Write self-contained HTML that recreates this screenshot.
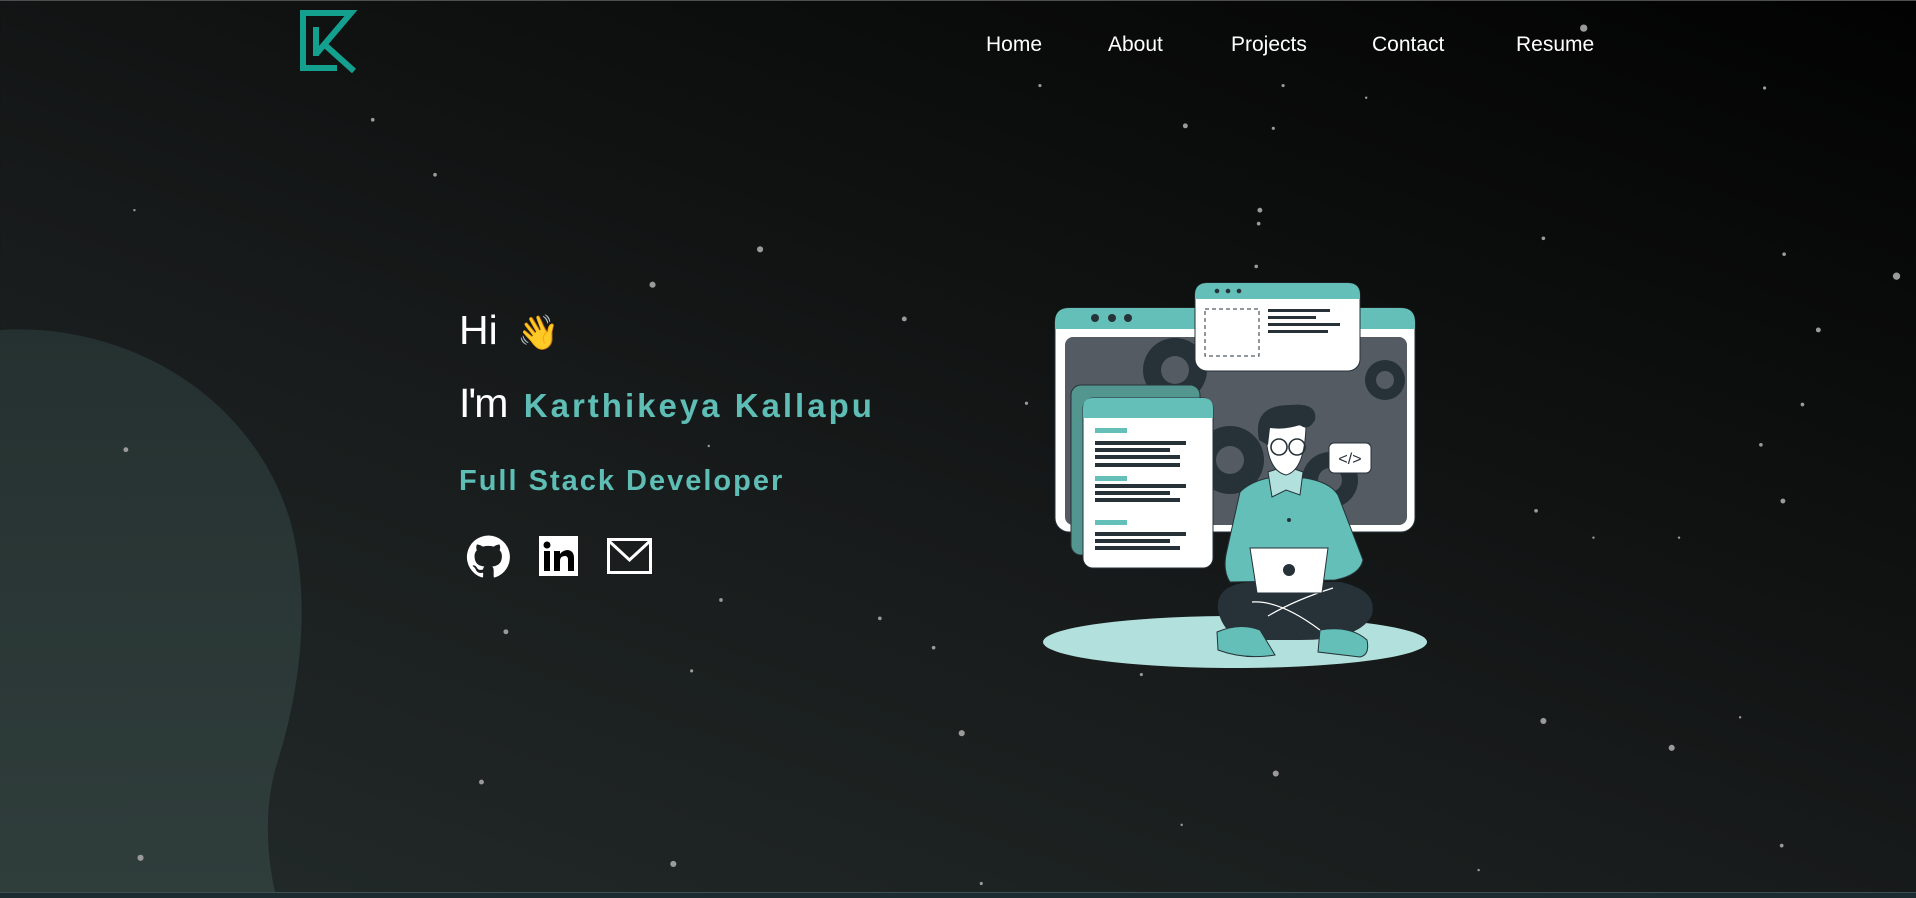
<!DOCTYPE html>
<html><head><meta charset="utf-8"><style>
html,body{margin:0;padding:0}
body{width:1916px;height:897px;overflow:hidden;position:relative;font-family:"Liberation Sans",sans-serif;
background:linear-gradient(20deg,#232b2a 0%,#171a1a 45%,#0b0c0c 75%,#020202 100%);}
.top{position:absolute;left:0;top:0;width:1916px;height:1px;background:#4c4e50}
.bot{position:absolute;left:0;top:892px;width:1916px;height:5px;background:#1b2b30;border-top:1px solid #3d5058}
.nav{position:absolute;top:31px;color:#fff;font-size:21px;line-height:28px}
.t{position:absolute;color:#fff}
</style></head><body>
<svg width="1916" height="897" style="position:absolute;left:0;top:0">
<defs><linearGradient id="bg" x1="0" y1="0" x2="0" y2="1"><stop offset="0" stop-color="#253130"/><stop offset="1" stop-color="#2f3d3b"/></linearGradient></defs>
<path d="M0 330 C120 322 250 390 290 520 C312 600 300 690 278 760 C262 810 268 860 275 892 L0 892 Z" fill="url(#bg)"/>
<g fill="#9a9a9a" transform="scale(1.222)">
<circle cx="305" cy="98" r="1.5"/><circle cx="356" cy="143" r="1.5"/><circle cx="110" cy="172" r="1"/><circle cx="622" cy="204" r="2.5"/><circle cx="534" cy="233" r="2.5"/><circle cx="740" cy="261" r="2"/><circle cx="851" cy="70" r="1.3"/><circle cx="1050" cy="70" r="1.3"/><circle cx="1118" cy="80" r="1"/><circle cx="970" cy="103" r="2"/><circle cx="1042" cy="105" r="1.3"/><circle cx="1031" cy="172" r="2"/><circle cx="1030" cy="183" r="1.5"/><circle cx="1028" cy="218" r="1.5"/><circle cx="1263" cy="195" r="1.5"/><circle cx="1296" cy="23" r="3"/><circle cx="1444" cy="72" r="1.3"/><circle cx="1460" cy="208" r="1.5"/><circle cx="1552" cy="226" r="3"/><circle cx="1488" cy="270" r="2"/><circle cx="1475" cy="331" r="1.5"/><circle cx="1441" cy="364" r="1.5"/><circle cx="1459" cy="410" r="2"/><circle cx="1374" cy="440" r="1"/><circle cx="1304" cy="440" r="1"/><circle cx="1257" cy="418" r="1.5"/><circle cx="840" cy="330" r="1.3"/><circle cx="103" cy="368" r="2"/><circle cx="580" cy="365" r="1"/><circle cx="590" cy="491" r="1.5"/><circle cx="720" cy="506" r="1.5"/><circle cx="414" cy="517" r="2"/><circle cx="764" cy="530" r="1.5"/><circle cx="566" cy="549" r="1.3"/><circle cx="934" cy="552" r="1.3"/><circle cx="1263" cy="590" r="2.5"/><circle cx="1368" cy="612" r="2.5"/><circle cx="1424" cy="587" r="1"/><circle cx="787" cy="600" r="2.5"/><circle cx="394" cy="640" r="2"/><circle cx="1044" cy="633" r="2.5"/><circle cx="967" cy="675" r="1"/><circle cx="1458" cy="692" r="1.5"/><circle cx="115" cy="702" r="2.5"/><circle cx="551" cy="707" r="2.5"/><circle cx="803" cy="723" r="1.3"/><circle cx="1210" cy="712" r="1"/>
</g>
<!-- logo -->
<g fill="none" stroke="#14a08e" stroke-width="6" stroke-linejoin="miter">
<path d="M303 71 V13 H351 L317 53"/>
<path d="M303 68 H337"/>
<path d="M316 27 V56"/>
<path d="M325 45 L354 71"/>
</g>
<!-- illustration -->
<ellipse cx="1235" cy="642" rx="192" ry="26" fill="#b2e0dc"/>
<rect x="1055" y="308" width="360" height="224" rx="14" fill="#fff" stroke="#263238" stroke-width="1"/>
<path d="M1055 329 V322 Q1055 308 1069 308 H1401 Q1415 308 1415 322 V329 Z" fill="#63bfb8"/>
<rect x="1065" y="337" width="342" height="188" rx="8" fill="#545b62"/>
<g fill="#263238">
<circle cx="1095" cy="318" r="4"/><circle cx="1112" cy="318" r="4"/><circle cx="1128" cy="318" r="4"/>
<circle cx="1175" cy="370" r="32"/><circle cx="1230" cy="460" r="34"/><circle cx="1385" cy="380" r="20"/><circle cx="1330" cy="480" r="28"/>
</g>
<g fill="#545b62"><circle cx="1175" cy="370" r="14"/><circle cx="1230" cy="460" r="14"/><circle cx="1385" cy="380" r="9"/><circle cx="1330" cy="480" r="12"/></g>
<rect x="1195" y="283" width="165" height="88" rx="12" fill="#fff" stroke="#263238" stroke-width="1"/>
<path d="M1195 299 V295 Q1195 283 1207 283 H1348 Q1360 283 1360 295 V299 Z" fill="#63bfb8"/>
<g fill="#263238"><circle cx="1217" cy="291" r="2.3"/><circle cx="1228" cy="291" r="2.3"/><circle cx="1239" cy="291" r="2.3"/>
<rect x="1268" y="309" width="62" height="3"/><rect x="1268" y="316" width="48" height="3"/><rect x="1268" y="323" width="72" height="3"/><rect x="1268" y="330" width="60" height="3"/></g>
<rect x="1205" y="309" width="54" height="47" fill="none" stroke="#263238" stroke-dasharray="4 3"/>
<rect x="1071" y="385" width="129" height="170" rx="10" fill="#52968f" stroke="#263238"/>
<rect x="1083" y="398" width="130" height="170" rx="10" fill="#fff" stroke="#263238"/>
<path d="M1083 418 V408 Q1083 398 1093 398 H1203 Q1213 398 1213 408 V418 Z" fill="#63bfb8"/>
<g fill="#63bfb8"><rect x="1095" y="428" width="32" height="5"/><rect x="1095" y="476" width="32" height="5"/><rect x="1095" y="520" width="32" height="5"/></g>
<g fill="#263238"><rect x="1095" y="441" width="91" height="4"/><rect x="1095" y="448" width="75" height="4"/><rect x="1095" y="455" width="85" height="4"/><rect x="1095" y="463" width="85" height="4"/><rect x="1095" y="484" width="91" height="4"/><rect x="1095" y="491" width="75" height="4"/><rect x="1095" y="498" width="85" height="4"/><rect x="1095" y="532" width="91" height="4"/><rect x="1095" y="539" width="75" height="4"/><rect x="1095" y="546" width="85" height="4"/></g>
<rect x="1329" y="443" width="42" height="30" rx="5" fill="#fff" stroke="#263238"/>
<text x="1350" y="464" font-size="16" text-anchor="middle" fill="#263238" font-family="Liberation Sans">&lt;/&gt;</text>
<!-- person -->
<path d="M1240 492 Q1250 482 1268 478 H1305 Q1330 482 1338 495 L1363 560 Q1360 575 1335 580 L1230 582 Q1222 570 1227 550 Z" fill="#63bfb8" stroke="#263238"/>
<path d="M1218 610 Q1215 585 1250 582 H1340 Q1378 590 1372 615 Q1360 640 1300 640 H1240 Q1222 630 1218 610Z" fill="#263238"/>
<path d="M1217 632 Q1240 622 1260 630 L1275 655 Q1245 660 1218 650Z" fill="#63bfb8" stroke="#263238"/>
<path d="M1320 630 Q1350 625 1367 640 Q1370 655 1360 657 L1318 652Z" fill="#63bfb8" stroke="#263238"/>
<path d="M1252 602 Q1280 600 1320 630 M1268 616 Q1295 600 1333 588" stroke="#fff" fill="none" stroke-width="1.2"/>
<path d="M1250 548 H1328 L1322 593 H1257 Z" fill="#fff" stroke="#263238"/>
<circle cx="1289" cy="570" r="6" fill="#263238"/>
<path d="M1268 472 L1286 466 L1303 472 L1300 495 L1286 490 L1272 497 Z" fill="#b2e0dc" stroke="#263238"/>
<path d="M1266 425 Q1265 470 1286 475 Q1305 470 1306 425 Z" fill="#fff" stroke="#263238"/>
<path d="M1259 440 Q1252 405 1290 405 Q1318 402 1315 420 Q1308 432 1300 425 Q1285 430 1270 428 L1268 445 Z" fill="#263238"/>
<g fill="none" stroke="#263238" stroke-width="1.6"><circle cx="1279" cy="447" r="8"/><circle cx="1297" cy="447" r="8"/></g>
<circle cx="1289" cy="520" r="2" fill="#263238"/>
<!-- social icons -->
<g transform="translate(467,535) scale(1.79)" fill="#fff"><path d="M12 .3a12 12 0 0 0-3.8 23.4c.6.1.8-.3.8-.6v-2c-3.3.7-4-1.6-4-1.6-.6-1.4-1.4-1.8-1.4-1.8-1-.7.1-.7.1-.7 1.2.1 1.8 1.2 1.8 1.2 1 1.8 2.8 1.3 3.5 1 0-.8.4-1.3.7-1.600-2.7-.3-5.5-1.3-5.5-6 0-1.2.5-2.3 1.3-3.1-.2-.4-.6-1.6 0-3.2 0 0 1-.3 3.4 1.2a11.5 11.5 0 0 1 6 0c2.3-1.5 3.3-1.2 3.3-1.2.6 1.6.2 2.8 0 3.2.9.8 1.3 1.9 1.3 3.2 0 4.6-2.8 5.600-5.5 5.9.5.4.9 1 .9 2.2v3.3c0 .3.1.7.8.6A12 12 0 0 0 12 .3"/></g>
<rect x="539" y="536" width="39" height="40" fill="#fff"/>
<g fill="#000"><rect x="544" y="551" width="6" height="20"/><circle cx="547" cy="545" r="3.5"/><path d="M554 551 H560 V554 Q563 550 568 550 Q574 551 574 558 V571 H568 V560 Q568 556 565 556 Q560 556 560 561 V571 H554 Z"/></g>
<rect x="608.5" y="539.5" width="42" height="33" fill="none" stroke="#fff" stroke-width="3"/>
<path d="M609 541 L629.5 560 L650 541" fill="none" stroke="#fff" stroke-width="3"/>
</svg>
<div class="top"></div><div class="bot"></div>
<div class="nav" style="left:986px">Home</div>
<div class="nav" style="left:1108px">About</div>
<div class="nav" style="left:1231px">Projects</div>
<div class="nav" style="left:1372px">Contact</div>
<div class="nav" style="left:1516px">Resume</div>
<div class="t" style="left:459px;top:305px;font-size:41px;line-height:50px">Hi <span style="font-size:34px;margin-left:8px;font-family:'DejaVu Sans',sans-serif">👋</span></div>
<div class="t" style="left:459px;top:378px;font-size:41px;line-height:50px;letter-spacing:-2px">I'm <span style="color:#5ebdb4;font-size:33px;font-weight:bold;letter-spacing:3px;margin-left:8px">Karthikeya Kallapu</span></div>
<div class="t" style="left:459px;top:462px;font-size:29px;line-height:38px;color:#5ebdb4;letter-spacing:2px;font-weight:bold">Full Stack Developer</div>
</body></html>
